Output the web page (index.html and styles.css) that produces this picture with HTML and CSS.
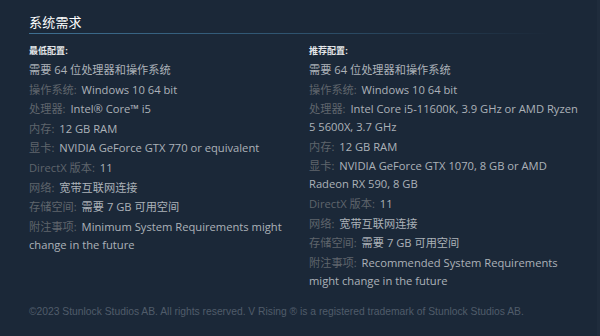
FILE: index.html
```html
<!DOCTYPE html>
<html lang="zh">
<head>
<meta charset="utf-8">
<link rel="stylesheet" href="styles.css">
</head>
<body>
<div class="panel">
  <h2 class="title">系统需求</h2>
  <div class="rule"></div>
  <div class="cols">
    <div class="col">
      <div class="cap">最低配置:</div>
      <ul class="reqs">
        <li>需要 64 位处理器和操作系统</li>
        <li><span class="k">操作系统:</span> Windows 10 64 bit</li>
        <li><span class="k">处理器:</span> Intel® Core™ i5</li>
        <li><span class="k">内存:</span> 12 GB RAM</li>
        <li><span class="k">显卡:</span> NVIDIA GeForce GTX 770 or equivalent</li>
        <li><span class="k">DirectX 版本:</span> 11</li>
        <li><span class="k">网络:</span> 宽带互联网连接</li>
        <li><span class="k">存储空间:</span> 需要 7 GB 可用空间</li>
        <li><span class="k">附注事项:</span> Minimum System Requirements might change in the future</li>
      </ul>
    </div>
    <div class="col">
      <div class="cap">推荐配置:</div>
      <ul class="reqs">
        <li>需要 64 位处理器和操作系统</li>
        <li><span class="k">操作系统:</span> Windows 10 64 bit</li>
        <li><span class="k">处理器:</span> Intel Core i5-11600K, 3.9 GHz or AMD Ryzen 5 5600X, 3.7 GHz</li>
        <li><span class="k">内存:</span> 12 GB RAM</li>
        <li><span class="k">显卡:</span> NVIDIA GeForce GTX 1070, 8 GB or AMD Radeon RX 590, 8 GB</li>
        <li><span class="k">DirectX 版本:</span> 11</li>
        <li><span class="k">网络:</span> 宽带互联网连接</li>
        <li><span class="k">存储空间:</span> 需要 7 GB 可用空间</li>
        <li><span class="k">附注事项:</span> Recommended System Requirements might change in the future</li>
      </ul>
    </div>
  </div>
  <p class="legal">©2023 Stunlock Studios AB. All rights reserved. V Rising ® is a registered trademark of Stunlock Studios AB.</p>
</div>
</body>
</html>
```

FILE: styles.css
```css
html, body {
  margin: 0;
  padding: 0;
  background: #1b2838;
}
body {
  width: 600px;
  height: 336px;
  overflow: hidden;
  font-family: "Open Sans", "Noto Sans CJK SC", sans-serif;
}
.panel {
  box-sizing: border-box;
  height: 336px;
  padding: 13px 0 0 29px;
  border-right: 3px solid #1f2c3c;
}
.title {
  margin: 0;
  font-size: 13px;
  font-weight: normal;
  line-height: 19px;
  color: #ffffff;
  letter-spacing: 0.2px;
}
.rule {
  margin-top: 1px;
  height: 1px;
  width: 520px;
  background: linear-gradient(to right, #3e6f91 0%, #2f5470 50%, rgba(47, 84, 112, 0) 100%);
}
.cols {
  display: grid;
  grid-template-columns: 273px 273px;
  column-gap: 7px;
  margin-top: 10px;
}
.cap {
  font-family: "Liberation Sans", "Noto Sans CJK SC", sans-serif;
  font-size: 9px;
  font-weight: bold;
  color: #e4e7e9;
  line-height: 14px;
  margin-bottom: 3px;
}
.reqs {
  list-style: none;
  margin: 0;
  padding: 0;
  font-size: 11.2px;
  line-height: 18px;
  color: #acb2b8;
}
.reqs li {
  margin-bottom: 1.6px;
}
.k {
  color: #5f656c;
  margin-right: 2px;
}
.legal {
  margin: 14px 0 0;
  font-family: "Liberation Sans", Arial, sans-serif;
  font-size: 10.3px;
  color: #505c6a;
  line-height: 14px;
}
```
